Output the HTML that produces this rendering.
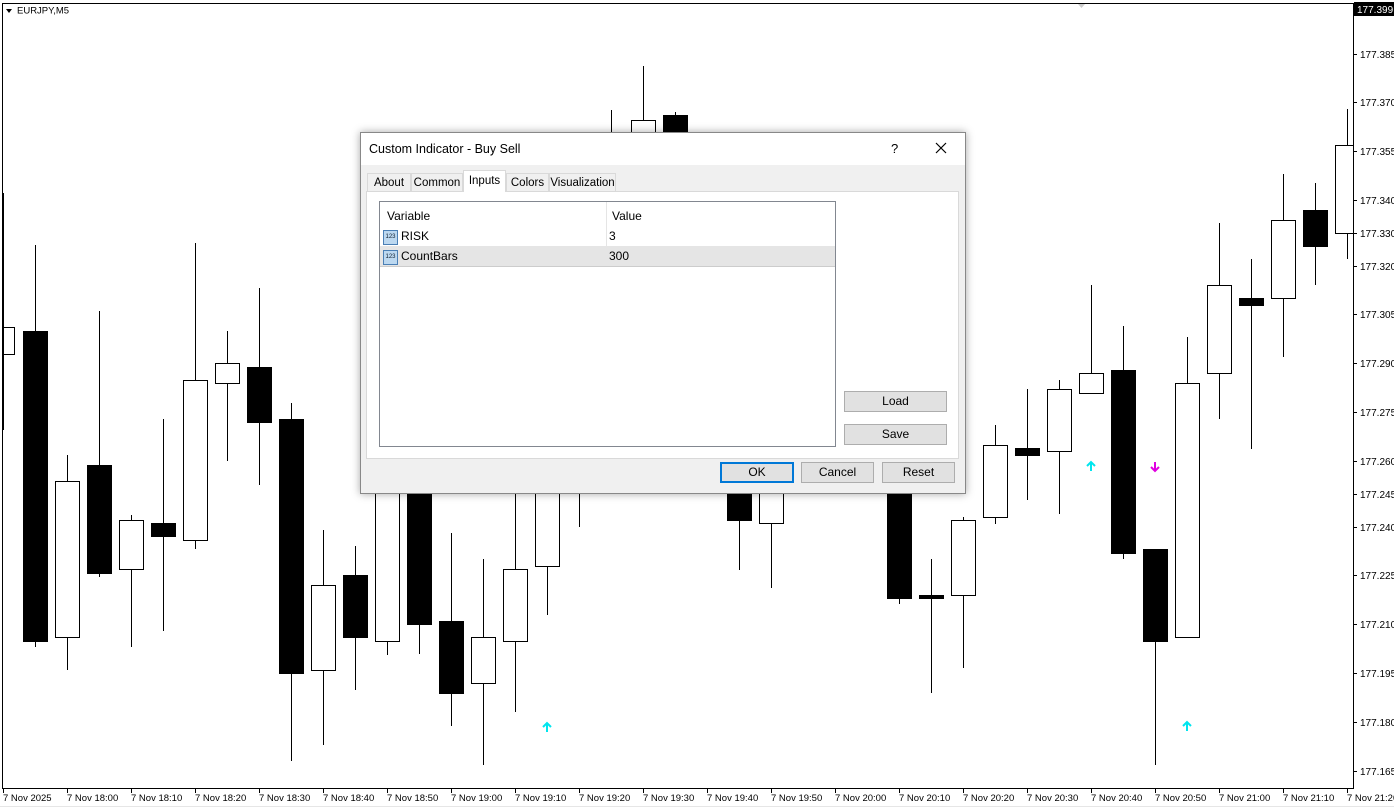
<!DOCTYPE html>
<html><head><meta charset="utf-8"><style>
body{margin:0;width:1394px;height:810px;background:#fff;overflow:hidden;font-family:"Liberation Sans",sans-serif;position:relative}
.dlg{position:absolute;left:360px;top:132px;width:604px;height:360px;background:#f0f0f0;border:1px solid #888;box-shadow:0 0 8px rgba(0,0,0,.35);font-size:12px;color:#000}
.tb{position:absolute;left:0;top:0;right:0;height:32px;background:#fff}
.ab{position:absolute}
.tab{position:absolute;top:40px;height:18px;border:1px solid #d9d9d9;border-bottom:none;background:#f0f0f0;line-height:18px;text-align:center;font-size:11.5px;box-sizing:border-box}
.btn{position:absolute;background:#e1e1e1;border:1px solid #adadad;text-align:center;line-height:19px;font-size:12px}
</style></head><body>
<svg width="1394" height="810" style="position:absolute;left:0;top:0" font-family="Liberation Sans, sans-serif" font-size="10">
<rect x="2.5" y="3.5" width="1351" height="785" fill="none" stroke="#000"/>
<rect x="0" y="790" width="1394" height="20" fill="#fff"/>
<line x1="0" y1="806.5" x2="1394" y2="806.5" stroke="#e6e6e6"/>
<g stroke="#000" fill="#fff">
<line x1="3.5" y1="193" x2="3.5" y2="430"/>
<rect x="3.5" y="327.5" width="11" height="27"/>
<line x1="35.5" y1="245" x2="35.5" y2="647"/><rect x="23.5" y="331.5" width="24" height="310" fill="#000"/>
<line x1="67.5" y1="455" x2="67.5" y2="670"/><rect x="55.5" y="481.5" width="24" height="156"/>
<line x1="99.5" y1="311" x2="99.5" y2="577"/><rect x="87.5" y="465.5" width="24" height="108" fill="#000"/>
<line x1="131.5" y1="515" x2="131.5" y2="647"/><rect x="119.5" y="520.5" width="24" height="49"/>
<line x1="163.5" y1="419" x2="163.5" y2="631"/><rect x="151.5" y="523.5" width="24" height="13" fill="#000"/>
<line x1="195.5" y1="243" x2="195.5" y2="549"/><rect x="183.5" y="380.5" width="24" height="160"/>
<line x1="227.5" y1="331" x2="227.5" y2="461"/><rect x="215.5" y="363.5" width="24" height="20"/>
<line x1="259.5" y1="288" x2="259.5" y2="485"/><rect x="247.5" y="367.5" width="24" height="55" fill="#000"/>
<line x1="291.5" y1="403" x2="291.5" y2="761"/><rect x="279.5" y="419.5" width="24" height="254" fill="#000"/>
<line x1="323.5" y1="530" x2="323.5" y2="745"/><rect x="311.5" y="585.5" width="24" height="85"/>
<line x1="355.5" y1="546" x2="355.5" y2="690"/><rect x="343.5" y="575.5" width="24" height="62" fill="#000"/>
<line x1="387.5" y1="460" x2="387.5" y2="655"/><rect x="375.5" y="470.5" width="24" height="171"/>
<line x1="419.5" y1="470" x2="419.5" y2="654"/><rect x="407.5" y="480.5" width="24" height="144" fill="#000"/>
<line x1="451.5" y1="533" x2="451.5" y2="726"/><rect x="439.5" y="621.5" width="24" height="72" fill="#000"/>
<line x1="483.5" y1="559" x2="483.5" y2="765"/><rect x="471.5" y="637.5" width="24" height="46"/>
<line x1="515.5" y1="480" x2="515.5" y2="712"/><rect x="503.5" y="569.5" width="24" height="72"/>
<line x1="547.5" y1="480" x2="547.5" y2="615"/><rect x="535.5" y="485.5" width="24" height="81"/>
<line x1="579.5" y1="480" x2="579.5" y2="527"/>
<line x1="611.5" y1="110" x2="611.5" y2="140"/>
<line x1="643.5" y1="66" x2="643.5" y2="140"/><rect x="631.5" y="120.5" width="24" height="30"/>
<line x1="675.5" y1="112" x2="675.5" y2="140"/><rect x="663.5" y="115.5" width="24" height="30" fill="#000"/>
<line x1="739.5" y1="480" x2="739.5" y2="570"/><rect x="727.5" y="485.5" width="24" height="35" fill="#000"/>
<line x1="771.5" y1="480" x2="771.5" y2="588"/><rect x="759.5" y="485.5" width="24" height="38"/>
<line x1="899.5" y1="480" x2="899.5" y2="604"/><rect x="887.5" y="485.5" width="24" height="113" fill="#000"/>
<line x1="931.5" y1="559" x2="931.5" y2="693"/><rect x="919.5" y="595.5" width="24" height="3" fill="#000"/>
<line x1="963.5" y1="517" x2="963.5" y2="668"/><rect x="951.5" y="520.5" width="24" height="75"/>
<line x1="995.5" y1="425" x2="995.5" y2="524"/><rect x="983.5" y="445.5" width="24" height="72"/>
<line x1="1027.5" y1="389" x2="1027.5" y2="500"/><rect x="1015.5" y="448.5" width="24" height="7" fill="#000"/>
<line x1="1059.5" y1="380" x2="1059.5" y2="514"/><rect x="1047.5" y="389.5" width="24" height="62"/>
<line x1="1091.5" y1="285" x2="1091.5" y2="393"/><rect x="1079.5" y="373.5" width="24" height="20"/>
<line x1="1123.5" y1="326" x2="1123.5" y2="559"/><rect x="1111.5" y="370.5" width="24" height="183" fill="#000"/>
<line x1="1155.5" y1="549" x2="1155.5" y2="765"/><rect x="1143.5" y="549.5" width="24" height="92" fill="#000"/>
<line x1="1187.5" y1="337" x2="1187.5" y2="637"/><rect x="1175.5" y="383.5" width="24" height="254"/>
<line x1="1219.5" y1="223" x2="1219.5" y2="419"/><rect x="1207.5" y="285.5" width="24" height="88"/>
<line x1="1251.5" y1="259" x2="1251.5" y2="449"/><rect x="1239.5" y="298.5" width="24" height="7" fill="#000"/>
<line x1="1283.5" y1="174" x2="1283.5" y2="357"/><rect x="1271.5" y="220.5" width="24" height="78"/>
<line x1="1315.5" y1="183" x2="1315.5" y2="285"/><rect x="1303.5" y="210.5" width="24" height="36" fill="#000"/>
<line x1="1347.5" y1="109" x2="1347.5" y2="259"/><rect x="1335.5" y="145.5" width="18" height="88"/>
</g>
<g stroke="#00e5ee" stroke-width="2" fill="none">
<path d="M547 732V723M543 727L547 723L551 727"/>
<path d="M1091 471V462M1087 466L1091 462L1095 466"/>
<path d="M1187 731V722M1183 726L1187 722L1191 726"/>
</g>
<path d="M1155 462V471M1151 467L1155 471L1159 467" stroke="#e000e0" stroke-width="2" fill="none"/>
<path d="M6 9L12 9L9 13Z" fill="#000"/>
<text x="17" y="13.5" font-size="9.5">EURJPY,M5</text>
<path d="M1078 4L1085 4L1081.5 8Z" fill="#ccc"/>
<g fill="#000">
<rect x="1354" y="2" width="40" height="14" fill="#000"/>
<text x="1357" y="13" fill="#fff">177.399</text>
<text x="1360" y="58">177.385</text><text x="1360" y="106">177.370</text>
<text x="1360" y="155">177.355</text><text x="1360" y="204">177.340</text>
<text x="1360" y="237">177.330</text><text x="1360" y="270">177.320</text>
<text x="1360" y="318">177.305</text><text x="1360" y="367">177.290</text>
<text x="1360" y="416">177.275</text><text x="1360" y="465">177.260</text>
<text x="1360" y="498">177.245</text><text x="1360" y="531">177.240</text>
<text x="1360" y="579">177.225</text><text x="1360" y="628">177.210</text>
<text x="1360" y="677">177.195</text><text x="1360" y="726">177.180</text>
<text x="1360" y="775">177.165</text>
</g>
<g stroke="#000">
<path d="M1353 54.5h4M1353 102.5h4M1353 151.5h4M1353 200.5h4M1353 233.5h4M1353 266.5h4M1353 314.5h4M1353 363.5h4M1353 412.5h4M1353 461.5h4M1353 494.5h4M1353 527.5h4M1353 575.5h4M1353 624.5h4M1353 673.5h4M1353 722.5h4M1353 771.5h4"/>
<path d="M3.5 788v5M67.5 788v5M131.5 788v5M195.5 788v5M259.5 788v5M323.5 788v5M387.5 788v5M451.5 788v5M515.5 788v5M579.5 788v5M643.5 788v5M707.5 788v5M771.5 788v5M835.5 788v5M899.5 788v5M963.5 788v5M1027.5 788v5M1091.5 788v5M1155.5 788v5M1219.5 788v5M1283.5 788v5M1347.5 788v5"/>
</g>
<g font-size="9.5">
<text x="3" y="801">7 Nov 2025</text>
<text x="67" y="801">7 Nov 18:00</text><text x="131" y="801">7 Nov 18:10</text><text x="195" y="801">7 Nov 18:20</text>
<text x="259" y="801">7 Nov 18:30</text><text x="323" y="801">7 Nov 18:40</text><text x="387" y="801">7 Nov 18:50</text>
<text x="451" y="801">7 Nov 19:00</text><text x="515" y="801">7 Nov 19:10</text><text x="579" y="801">7 Nov 19:20</text>
<text x="643" y="801">7 Nov 19:30</text><text x="707" y="801">7 Nov 19:40</text><text x="771" y="801">7 Nov 19:50</text>
<text x="835" y="801">7 Nov 20:00</text><text x="899" y="801">7 Nov 20:10</text><text x="963" y="801">7 Nov 20:20</text>
<text x="1027" y="801">7 Nov 20:30</text><text x="1091" y="801">7 Nov 20:40</text><text x="1155" y="801">7 Nov 20:50</text>
<text x="1219" y="801">7 Nov 21:00</text><text x="1283" y="801">7 Nov 21:10</text><text x="1347" y="801">7 Nov 21:20</text>
</g>
</svg>

<div class="dlg">
 <div class="tb"></div>
 <div class="ab" style="left:8px;top:9px;font-size:12.5px">Custom Indicator - Buy Sell</div>
 <div class="ab" style="left:530px;top:8px;font-size:13px">?</div>
 <svg class="ab" style="left:574px;top:9px" width="12" height="12"><path d="M1 1L11 11M11 1L1 11" stroke="#000" stroke-width="1.2"/></svg>
 <div class="ab" style="left:5px;top:58px;width:591px;height:266px;background:#fff;border:1px solid #d9d9d9"></div>
 <div class="tab" style="left:6px;width:44px">About</div>
 <div class="tab" style="left:50px;width:52px">Common</div>
 <div class="tab" style="left:102px;width:43px;top:37px;height:22px;line-height:20px;background:#fff;z-index:2">Inputs</div>
 <div class="tab" style="left:145px;width:43px">Colors</div>
 <div class="tab" style="left:188px;width:67px">Visualization</div>
 <div class="ab" style="left:18px;top:68px;width:455px;height:244px;background:#fff;border:1px solid #828790">
  <div class="ab" style="left:226px;top:0;width:1px;height:64px;background:#e5e5e5"></div>
  <div class="ab" style="left:7px;top:7px">Variable</div>
  <div class="ab" style="left:232px;top:7px">Value</div>
  <div class="ab" style="left:0;top:44px;width:455px;height:20px;background:#e5e5e5;border-bottom:1px solid #ccc"></div>
  <div class="ab" style="left:3px;top:28px;width:13px;height:13px;background:#bcd8f0;border:1px solid #4a7fb5;font-size:6px;line-height:13px;color:#123;text-align:center">123</div>
  <div class="ab" style="left:21px;top:27px">RISK</div>
  <div class="ab" style="left:229px;top:27px">3</div>
  <div class="ab" style="left:3px;top:48px;width:13px;height:13px;background:#bcd8f0;border:1px solid #4a7fb5;font-size:6px;line-height:13px;color:#123;text-align:center">123</div>
  <div class="ab" style="left:21px;top:47px">CountBars</div>
  <div class="ab" style="left:229px;top:47px">300</div>
 </div>
 <div class="btn" style="left:483px;top:258px;width:101px">Load</div>
 <div class="btn" style="left:483px;top:291px;width:101px">Save</div>
 <div class="btn" style="left:359px;top:329px;width:70px;border:2px solid #0078d7;line-height:17px">OK</div>
 <div class="btn" style="left:440px;top:329px;width:71px">Cancel</div>
 <div class="btn" style="left:521px;top:329px;width:71px">Reset</div>
</div>
</body></html>
